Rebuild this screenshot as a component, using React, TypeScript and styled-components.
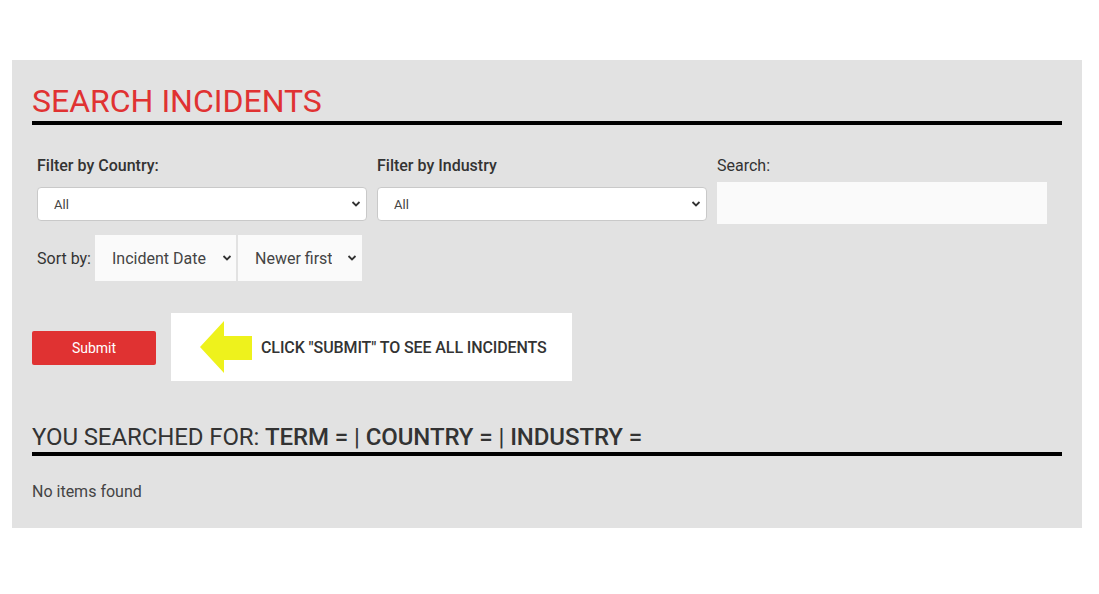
import React from "react";
import styled, { createGlobalStyle } from "styled-components";

const GlobalStyle = createGlobalStyle`
  html, body {
    margin: 0;
    padding: 0;
    background: #ffffff;
    font-family: Roboto, "Liberation Sans", Arial, sans-serif;
    color: #333333;
  }
`;

const Page = styled.div`
  padding: 60px 0 0 12px;
`;

const Panel = styled.section`
  width: 1070px;
  box-sizing: border-box;
  background: #e2e2e2;
  padding: 23px 20px 24px;
`;

const Title = styled.h1`
  margin: 0;
  font-size: 32px;
  line-height: 36px;
  font-weight: 400;
  color: #e03232;
  padding-bottom: 2px;
  border-bottom: 4px solid #000;
`;

const FilterGrid = styled.div`
  display: grid;
  grid-template-columns: repeat(3, 340px);
  margin-top: 31px;
  align-items: start;
`;

const Field = styled.div`
  display: flex;
  flex-direction: column;
  padding: 0 5px;
`;

const Label = styled.label<{ $bold?: boolean }>`
  font-size: 16px;
  line-height: 20px;
  font-weight: ${(p) => (p.$bold ? 500 : 400)};
  color: #333;
`;

const SelectWrap = styled.div<{ $mt?: number }>`
  position: relative;
  margin-top: ${(p) => p.$mt ?? 0}px;
`;

const Select = styled.select<{ $variant?: "box" | "flat" }>`
  appearance: none;
  -webkit-appearance: none;
  width: 100%;
  box-sizing: border-box;
  font-family: Roboto, "Liberation Sans", Arial, sans-serif;
  outline: none;
  color: #444;
  ${(p) =>
    p.$variant === "flat"
      ? `
    height: 46px;
    background: #fafafa;
    border: none;
    border-radius: 0;
    font-size: 16px;
    padding: 0 30px 0 17px;
  `
      : `
    height: 34px;
    background: #ffffff;
    border: 1px solid #c9c9c9;
    border-radius: 4px;
    font-size: 13px;
    padding: 0 30px 0 16px;
  `}
`;

const Chevron = styled.svg<{ $right: number }>`
  position: absolute;
  right: ${(p) => p.$right}px;
  top: 50%;
  transform: translateY(-50%);
  pointer-events: none;
`;

const SearchInput = styled.input`
  margin-top: 6px;
  height: 42px;
  box-sizing: border-box;
  border: none;
  background: #fafafa;
  outline: none;
  font-size: 15px;
  padding: 0 10px;
`;

const SortRow = styled.div`
  display: flex;
  align-items: center;
  margin-top: 11px;
  padding-left: 5px;
  gap: 2px;
`;

const SortLabel = styled.span`
  font-size: 16px;
  color: #333;
  width: 56px;
`;

const ActionRow = styled.div`
  display: flex;
  align-items: center;
  gap: 15px;
  margin-top: 32px;
`;

const SubmitButton = styled.button`
  width: 124px;
  height: 34px;
  margin-top: 2px;
  background: #e03232;
  color: #fff;
  border: none;
  border-radius: 2px;
  font-family: Roboto, "Liberation Sans", Arial, sans-serif;
  font-size: 14px;
  cursor: pointer;
`;

const Callout = styled.div`
  width: 401px;
  height: 68px;
  box-sizing: border-box;
  background: #fff;
  display: flex;
  align-items: center;
  padding-left: 29px;
  gap: 9px;
`;

const CalloutText = styled.span`
  font-size: 16px;
  font-weight: 500;
  color: #333;
  letter-spacing: -0.1px;
  white-space: nowrap;
`;

const ResultsHeading = styled.h2`
  margin: 42px 0 0;
  font-size: 24px;
  line-height: 28px;
  font-weight: 400;
  letter-spacing: -0.1px;
  color: #333;
  padding-bottom: 1px;
  border-bottom: 4px solid #000;

  b {
    font-weight: 500;
  }
`;

const Empty = styled.p`
  margin: 24px 0 0;
  font-size: 16px;
  line-height: 24px;
  color: #444;
`;

const ChevronIcon = ({ right }: { right: number }) => (
  <Chevron $right={right} width="10" height="7" viewBox="0 0 10 7">
    <path d="M1.5 1.5 L5 5 L8.5 1.5" fill="none" stroke="#333" strokeWidth="1.8" />
  </Chevron>
);

export default function App() {
  return (
    <>
      <GlobalStyle />
      <Page>
        <Panel>
          <Title>SEARCH INCIDENTS</Title>
          <FilterGrid>
            <Field>
              <Label $bold>Filter by Country:</Label>
              <SelectWrap $mt={11}>
                <Select defaultValue="all">
                  <option value="all">All</option>
                </Select>
                <ChevronIcon right={6} />
              </SelectWrap>
            </Field>
            <Field>
              <Label $bold>Filter by Industry</Label>
              <SelectWrap $mt={11}>
                <Select defaultValue="all">
                  <option value="all">All</option>
                </Select>
                <ChevronIcon right={6} />
              </SelectWrap>
            </Field>
            <Field>
              <Label>Search:</Label>
              <SearchInput type="text" />
            </Field>
          </FilterGrid>

          <SortRow>
            <SortLabel>Sort by:</SortLabel>
            <SelectWrap style={{ width: 141 }}>
              <Select $variant="flat" defaultValue="date">
                <option value="date">Incident Date</option>
              </Select>
              <ChevronIcon right={4} />
            </SelectWrap>
            <SelectWrap style={{ width: 124 }}>
              <Select $variant="flat" defaultValue="newer">
                <option value="newer">Newer first</option>
              </Select>
              <ChevronIcon right={5} />
            </SelectWrap>
          </SortRow>

          <ActionRow>
            <SubmitButton>Submit</SubmitButton>
            <Callout>
              <svg width="52" height="52" viewBox="0 0 52 52">
                <polygon
                  points="0,26 24,0 24,15 52,15 52,39 24,39 24,52"
                  fill="#eef21c"
                />
              </svg>
              <CalloutText>CLICK "SUBMIT" TO SEE ALL INCIDENTS</CalloutText>
            </Callout>
          </ActionRow>

          <ResultsHeading>
            YOU SEARCHED FOR: <b>TERM =</b> | <b>COUNTRY =</b> | <b>INDUSTRY =</b>
          </ResultsHeading>
          <Empty>No items found</Empty>
        </Panel>
      </Page>
    </>
  );
}
